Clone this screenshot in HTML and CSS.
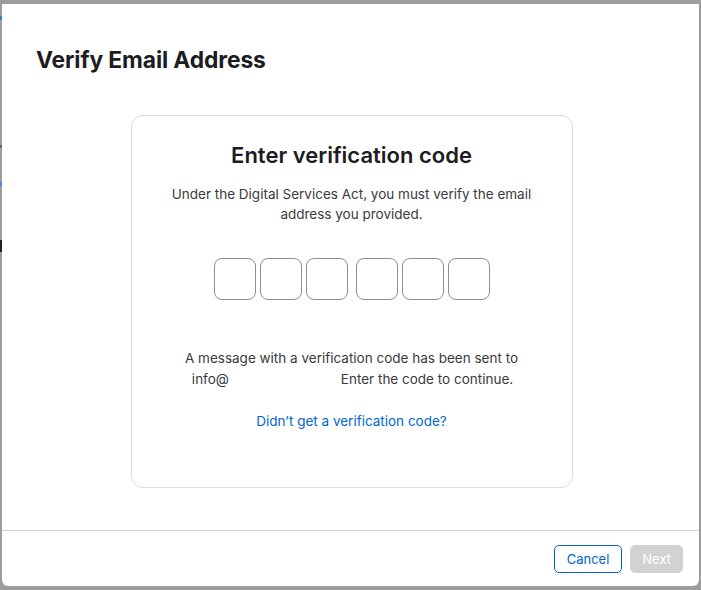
FILE: index.html
```html
<!DOCTYPE html>
<html lang="en">
<head>
    <meta charset="UTF-8">
    <meta name="viewport" content="width=device-width, initial-scale=1.0">
    <title>Verify Email Address</title>
    <link rel="stylesheet" href="styles.css">
</head>
<body>
    <!-- Page behind the sheet -->
    <div class="backdrop">
        <span class="peek peek-blue"></span>
        <span class="peek peek-grey"></span>
        <span class="peek peek-blue2"></span>
        <span class="peek peek-dark"></span>
    </div>

    <!-- Verify sheet -->
    <div class="sheet">
        <h1 class="sheet-title">Verify Email Address</h1>

        <div class="sheet-body">
            <div class="card">
                <h2>Enter verification code</h2>
                <p class="intro">Under the Digital Services Act, you must verify the email address you provided.</p>

                <div class="code-fields">
                    <div class="code-group">
                        <input type="text" maxlength="1" class="code-box">
                        <input type="text" maxlength="1" class="code-box">
                        <input type="text" maxlength="1" class="code-box">
                    </div>
                    <div class="code-group">
                        <input type="text" maxlength="1" class="code-box">
                        <input type="text" maxlength="1" class="code-box">
                        <input type="text" maxlength="1" class="code-box">
                    </div>
                </div>

                <div class="sent">
                    <p>A message with a verification code has been sent to</p>
                    <!-- the address itself is blanked out in the original -->
                    <p class="sent-line">
                        <span>info@</span>
                        <span>Enter the code to continue.</span>
                    </p>
                </div>

                <a href="#" class="resend">Didn’t get a verification code?</a>
            </div>
        </div>

        <div class="sheet-footer">
            <button class="btn btn-cancel">Cancel</button>
            <button class="btn btn-next" disabled>Next</button>
        </div>
    </div>
</body>
</html>
```

FILE: styles.css
```css
* {
    margin: 0;
    padding: 0;
    box-sizing: border-box;
}

html, body {
    height: 100%;
    overflow: hidden;
}

body {
    background: #9d9d9d;
    font-family: 'Inter', 'Liberation Sans', sans-serif;
    color: #1d1d1f;
    padding: 4px 2px 4px 2px;
}

/* bits of the page behind that peek out on the left */
.backdrop {
    position: fixed;
    top: 0;
    left: 0;
    width: 2px;
    height: 100%;
}

.peek {
    position: absolute;
    left: 0;
    width: 2px;
}

.peek-blue { top: 16px; height: 4px; background: #3d7fc0; }
.peek-grey { top: 145px; height: 3px; background: #6a6a6a; }
.peek-blue2 { top: 182px; height: 4px; background: #4a8ad0; }
.peek-dark { top: 240px; height: 12px; background: #222; }

.sheet {
    height: 100%;
    background: #fff;
    border-radius: 0 0 6px 6px;
    display: flex;
    flex-direction: column;
}

.sheet-title {
    font-size: 22.8px;
    font-weight: 700;
    padding: 42px 34px 0;
    line-height: 28px;
    letter-spacing: -0.1px;
}

.sheet-body {
    flex: 1;
    display: flex;
    justify-content: center;
    align-items: flex-start;
    padding-top: 41px;
}

.card {
    width: 442px;
    height: 373px;
    margin-left: 2px;
    border: 1px solid #dcdcdc;
    border-radius: 12px;
    text-align: center;
    padding: 25px 30px 0;
    display: flex;
    flex-direction: column;
    align-items: center;
}

.card h2 {
    font-size: 22px;
    font-weight: 600;
    line-height: 28px;
    margin-bottom: 15px;
}

.intro {
    font-size: 13.5px;
    line-height: 20px;
    color: #3a3a3c;
    width: 370px;
}

.code-fields {
    display: flex;
    gap: 8px;
    margin-top: 34px;
}

.code-group {
    display: flex;
    gap: 4px;
}

.code-box {
    width: 42px;
    height: 42px;
    border: 1px solid #8e8e8e;
    border-radius: 8px;
    background: #fff;
    font: inherit;
    font-size: 20px;
    text-align: center;
    outline: none;
}

.sent {
    font-size: 13.5px;
    line-height: 21px;
    color: #3a3a3c;
    width: 350px;
    margin-top: 48px;
}

.sent-line {
    display: flex;
    justify-content: center;
    gap: 112px;
    padding-left: 2px;
}

.resend {
    margin-top: 21px;
    font-size: 13.5px;
    line-height: 20px;
    color: #0066cc;
    text-decoration: none;
}

.sheet-footer {
    border-top: 1px solid #d2d2d2;
    padding: 14px 16px 13px;
    display: flex;
    justify-content: flex-end;
    gap: 8px;
}

.btn {
    height: 28px;
    border-radius: 5px;
    font-family: inherit;
    font-size: 13px;
}

.btn-cancel {
    background: #fff;
    border: 1px solid #0066cc;
    color: #0066cc;
    padding: 0 12px;
}

.btn-next {
    background: #d2d2d2;
    border: 1px solid #d2d2d2;
    color: #fff;
    padding: 0 11px;
}
```
